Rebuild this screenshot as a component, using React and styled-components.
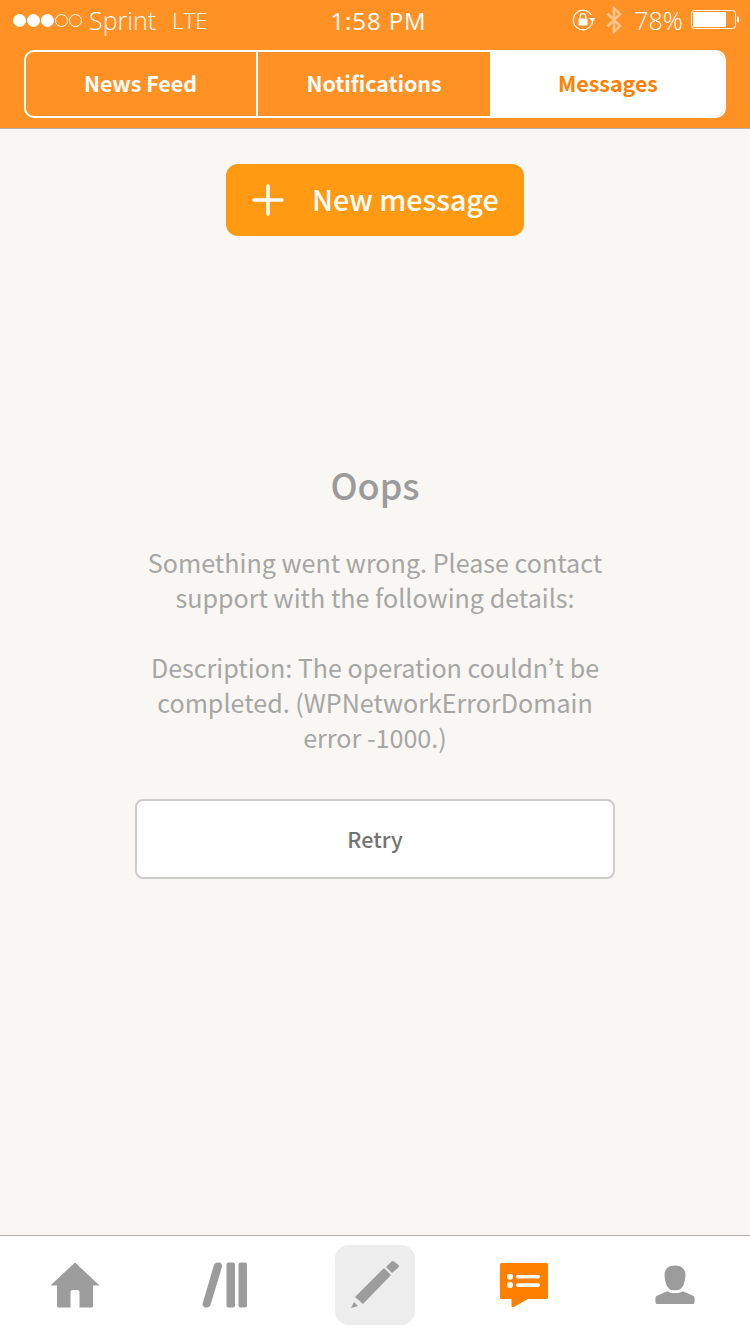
import React from "react";
import styled, { createGlobalStyle } from "styled-components";

const Global = createGlobalStyle`
  html, body { margin: 0; padding: 0; background: #f8f7f3; }
  * { box-sizing: border-box; }
`;
const SANS = `"Noto Sans CJK JP", "Noto Sans", sans-serif`;

const Page = styled.div`
  width: 750px; height: 1334px; display: flex; flex-direction: column;
  background: #f8f7f3; font-family: ${SANS}; overflow: hidden;
`;
const Header = styled.header`
  height: 129px; background: #ff9125; border-bottom: 1px solid #b3b1ac;
  display: flex; flex-direction: column;
`;
const StatusBar = styled.div`
  height: 40px; padding: 0 11px 0 13px; display: grid; grid-template-columns: 1fr auto 1fr; align-items: center;
  color: #fff; font-family: "Open Sans", sans-serif; font-size: 25px;
`;
const StatusLeft = styled.div`display: flex; align-items: center; height: 40px;`;
const StatusRight = styled.div`display: flex; align-items: center; justify-content: flex-end; height: 40px;`;
const Dot = styled.span`
  width: 13px; height: 13px; border-radius: 50%; margin-right: 1px;
  border: 1px solid #fff; background: ${p => (p.$on ? "#fff" : "transparent")};
`;
const Carrier = styled.span`font-weight: 300; margin-left: 6px;`;
const Network = styled.span`font-weight: 300; font-size: 22.5px; margin-left: 16px;`;
const Clock = styled.span`font-size: 24px; font-weight: 400; letter-spacing: .9px; margin-left: 5px;`;
const Percent = styled.span`font-weight: 300; font-size: 25px; margin: 0 8px 0 0;`;

const Segments = styled.nav`
  margin: 10px 24px 0; height: 68px; display: grid; grid-template-columns: 232px 232px 1fr;
  border: 2px solid #fff; border-radius: 10px; overflow: hidden;
`;
const Segment = styled.div`
  display: flex; align-items: center; justify-content: center;
  font-size: 21.4px; font-weight: 700; padding-bottom: 4px;
  padding-left: ${p => (p.$active ? "2px" : "0")};
  padding-right: ${p => (p.$divider ? "1px" : "0")};
  color: ${p => (p.$active ? "#ff8000" : "#fff")};
  background: ${p => (p.$active ? "#fff" : "transparent")};
  border-right: ${p => (p.$divider ? "2px solid #fff" : "0")};
`;
const Main = styled.main`
  flex: 1; display: flex; flex-direction: column; align-items: center; min-height: 0;
`;
const NewButton = styled.div`
  margin-top: 35px; width: 298px; height: 72px; border-radius: 12px; background: #ff9a12;
  display: flex; align-items: center; padding-left: 26px; gap: 28px;
  color: #fff; font-size: 28.6px; font-weight: 500;
`;
const PlusLabel = styled.span`padding-bottom: 3px;`;
const Title = styled.h1`
  margin: 222px 0 0; height: 52px; line-height: 52px; font-size: 36px; font-weight: 500; color: #9b9b9b;
`;
const Body = styled.p`
  margin: 35px 0 0; width: 480px; text-align: center; font-size: 25.1px; line-height: 35px;
  color: #a6a6a4; font-weight: 400;
`;
const Retry = styled.div`
  margin-top: 44px; width: 480px; height: 80px; padding-bottom: 2px; background: #fff; border: 2px solid #ccccca; border-radius: 8px;
  display: flex; align-items: center; justify-content: center; font-size: 21.5px; font-weight: 500; color: #737373;
`;
const TabBar = styled.footer`
  height: 99px; background: #fff; border-top: 1px solid #b3b1ac;
  display: grid; grid-template-columns: repeat(5, 150px); align-items: center; justify-items: center;
`;
const Tab = styled.div`
  width: 80px; height: 80px; border-radius: 14px; display: flex; align-items: center; justify-content: center;
  background: ${p => (p.$selected ? "#ededed" : "transparent")};
`;

const Home = () => (
  <svg width="50" height="46" viewBox="0 0 50 46"><path fill="#9c9c9c" d="M25 .5 49.500 23.500H43V44a1.500 1.500 0 0 1-1.500 1.500H29.500V30a2 2 0 0 0-2-2h-5a2 2 0 0 0-2 2v15.500H8.500A1.500 1.500 0 0 1 7 44V23.500H.5z" /></svg>
);
const Library = () => (
  <svg width="46" height="46" viewBox="0 0 46 46"><g fill="#9c9c9c"><path d="M12 3a3.600 3.600 0 0 1 3.400-2.500h1.300A3.300 3.300 0 0 1 20 4.700L8.600 42.800A3.600 3.600 0 0 1 5.200 45.500H4A3.300 3.300 0 0 1 .7 41.200z" /><rect x="24.500" y=".5" width="8.500" height="45" rx="2" /><rect x="36.500" y=".5" width="8.500" height="45" rx="2" /></g></svg>
);
const Pencil = () => (
  <svg width="48" height="48" viewBox="0 1 48 48"><g fill="#9c9c9c"><path d="M0 48 3 42 7 46z" /><path d="M4 37 33 8 40 15 12 44z" /><path d="M35 7 40.500 1.500a2 2 0 0 1 2.500 0L47.500 5a2 2 0 0 1 0 2.500L41 13z" /></g></svg>
);
const Chat = () => (
  <svg width="50" height="45" viewBox="0 0 50 45"><path fill="#ff8000" d="M1.500 0h45A1.500 1.500 0 0 1 48 1.500v33A1.500 1.500 0 0 1 46.500 36H28L14 44h-1.500a1 1 0 0 1-1-1V36h-10A1.500 1.500 0 0 1 0 34.500v-33A1.500 1.500 0 0 1 1.500 0z" /><g fill="#fff"><circle cx="10" cy="13.700" r="3" /><circle cx="10" cy="22" r="3" /><rect x="16" y="12" width="24" height="3.600" rx="1.800" /><rect x="16" y="20.300" width="24" height="3.600" rx="1.800" /></g></svg>
);
const Person = () => (
  <svg width="40" height="40" viewBox="0 0 42 42"><path fill="#9c9c9c" d="M21 .5c7.500 0 11 4.500 11 10 0 3-.5 6-1.500 9-1.200 4-4 7-7.500 7h-4c-3.500 0-6.300-3-7.500-7-1-3-1.500-6-1.500-9 0-5.500 3.500-10 11-10zM13 27.500c1.500 1 3.300 1.900 8 1.900s6.500-.9 8-1.900l10.500 4.500c1.300.6 2 1.500 2 2.800V39a2 2 0 0 1-2 2H2.500a2 2 0 0 1-2-2v-4.200c0-1.300.7-2.200 2-2.800z" /></svg>
);
const LockRotate = () => (
  <svg width="24" height="22" viewBox="0 0 24 22"><circle cx="11" cy="11" r="9.800" fill="none" stroke="#fff" strokeWidth="1.200" /><rect x="6.500" y="9.500" width="9" height="7" rx="1" fill="#fff" /><path d="M8.200 9.500V7.500a2.800 2.800 0 0 1 5.600 0v2" fill="none" stroke="#fff" strokeWidth="1.300" /><path fill="#fff" d="M17 9h6.500l-3.200 3.500z" /><rect x="18" y="6" width="4" height="3" fill="#ff9125" /></svg>
);
const Bluetooth = () => (
  <svg width="16" height="28" viewBox="0 0 16 28" style={{ margin: "0 12px 0 10px" }}><path d="M1.500 7.500 14 20 8 26V2l6 6L1.500 20.500" fill="none" stroke="#ffc48c" strokeWidth="2.600" /></svg>
);
const Battery = () => (
  <svg width="48" height="20" viewBox="0 0 48 20"><rect x=".5" y=".5" width="44" height="18" rx="3" fill="none" stroke="#fff" /><rect x="2" y="2" width="33" height="15" rx="1" fill="#fff" /><path fill="#fff" d="M46 6.500h.7c.7 0 1.300.6 1.300 1.300v3.400c0 .7-.6 1.300-1.300 1.300H46z" /></svg>
);
const Plus = () => (
  <svg width="32" height="32" viewBox="0 0 32 32"><path d="M16 2v28M2 16h28" stroke="#fff" strokeWidth="3.500" strokeLinecap="round" /></svg>
);

export default function App() {
  return (
    <Page>
      <Global />
      <Header>
        <StatusBar>
          <StatusLeft>
            <Dot $on /><Dot $on /><Dot $on /><Dot /><Dot />
            <Carrier>Sprint</Carrier>
            <Network>LTE</Network>
          </StatusLeft>
          <Clock>1:58 PM</Clock>
          <StatusRight>
            <LockRotate />
            <Bluetooth />
            <Percent>78%</Percent>
            <Battery />
          </StatusRight>
        </StatusBar>
        <Segments>
          <Segment $divider>News Feed</Segment>
          <Segment>Notifications</Segment>
          <Segment $active>Messages</Segment>
        </Segments>
      </Header>
      <Main>
        <NewButton><Plus /><PlusLabel>New message</PlusLabel></NewButton>
        <Title>Oops</Title>
        <Body>
          Something went wrong. Please contact support with the following details:
          <br /><br />
          Description: The operation couldn’t be completed. (WPNetworkErrorDomain error -1000.)
        </Body>
        <Retry>Retry</Retry>
      </Main>
      <TabBar>
        <Tab><Home /></Tab>
        <Tab><Library /></Tab>
        <Tab $selected><Pencil /></Tab>
        <Tab><Chat /></Tab>
        <Tab><Person /></Tab>
      </TabBar>
    </Page>
  );
}
